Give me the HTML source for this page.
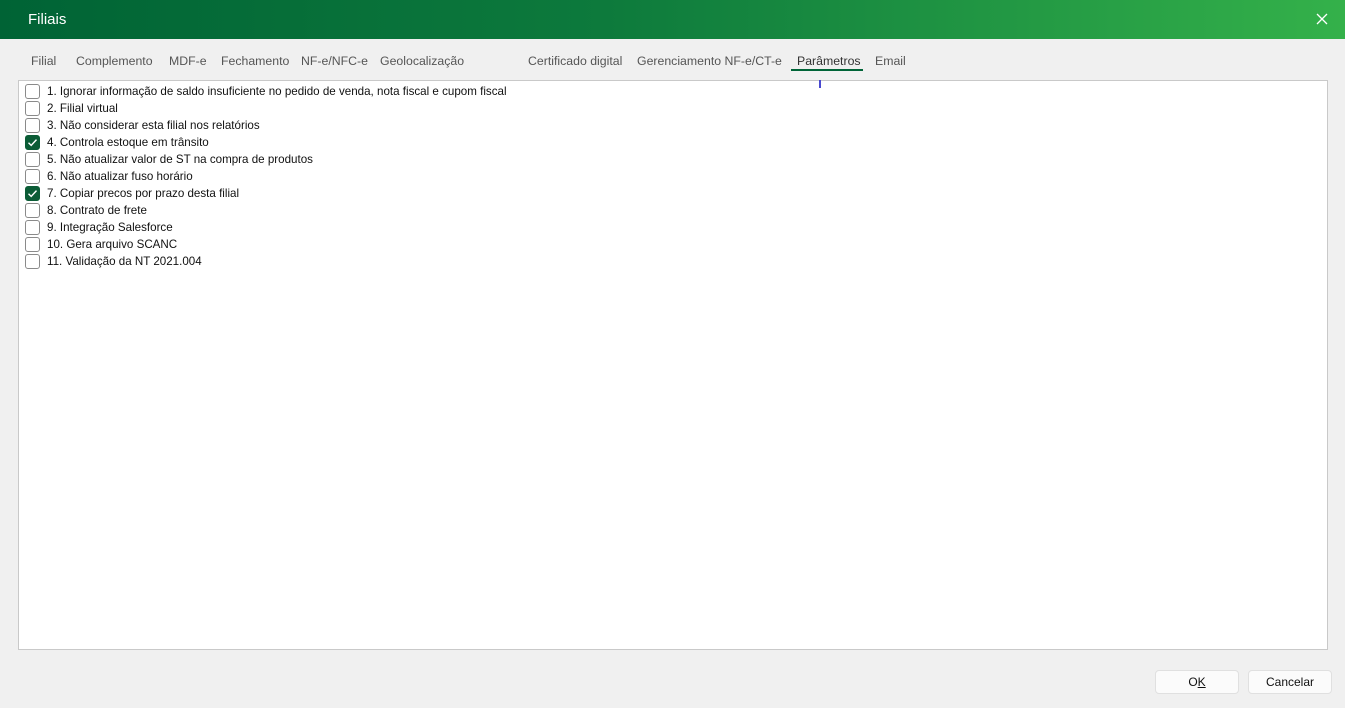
<!DOCTYPE html>
<html><head><meta charset="utf-8"><style>
*{margin:0;padding:0;box-sizing:border-box}
body{width:1345px;height:708px;background:#f0f0f0;font-family:"Liberation Sans",sans-serif;position:relative;overflow:hidden}
.title{position:absolute;left:0;top:0;width:1345px;height:39px;background:linear-gradient(90deg,#006335,#0d7a3c 45%,#34b14a);color:#fff;font-size:15px;line-height:39px;padding-left:28px}
.x{position:absolute;right:16px;top:12px;width:14px;height:14px}
.tab{position:absolute;top:54px;font-size:12.3px;color:#555;white-space:nowrap}
.ul{position:absolute;left:791px;top:69px;width:72px;height:2px;background:#006437}
.panel{position:absolute;left:18px;top:80px;width:1310px;height:570px;background:#fff;border:1px solid #c9c9c9}
.row{position:absolute;left:6px;height:17px;font-size:11.6px;color:#111;line-height:17px;padding-left:22px;white-space:nowrap}
.cb{position:absolute;left:0;top:1px;width:15px;height:15px;border:1px solid #8a8a8a;border-radius:3px;background:#fff}
.cb.on{background:#0b5c36;border-color:#0b5c36}
.cb.on svg{position:absolute;left:1px;top:1px}
.btn{position:absolute;top:670px;width:84px;height:24px;background:#fbfbfb;border:1px solid #e0e0e0;border-radius:4px;font-size:12px;text-align:center;line-height:22px;color:#111}
.cursor{position:absolute;left:819px;top:80px;width:2px;height:8px;background:#4a4ad0}
</style></head><body>
<div class="title">Filiais</div>
<svg class="x" viewBox="0 0 14 14"><path d="M2 2L12 12M12 2L2 12" stroke="#fff" stroke-width="1.3"/></svg>
<div class="tab" style="left:31px">Filial</div>
<div class="tab" style="left:76px">Complemento</div>
<div class="tab" style="left:169px">MDF-e</div>
<div class="tab" style="left:221px">Fechamento</div>
<div class="tab" style="left:301px">NF-e/NFC-e</div>
<div class="tab" style="left:380px">Geolocalização</div>
<div class="tab" style="left:528px">Certificado digital</div>
<div class="tab" style="left:637px">Gerenciamento NF-e/CT-e</div>
<div class="tab" style="left:797px;color:#333">Parâmetros</div>
<div class="tab" style="left:875px">Email</div>
<div class="ul"></div>
<div class="panel">
<div class="row" style="top:2px"><span class="cb"></span>1. Ignorar informação de saldo insuficiente no pedido de venda, nota fiscal e cupom fiscal</div>
<div class="row" style="top:19px"><span class="cb"></span>2. Filial virtual</div>
<div class="row" style="top:36px"><span class="cb"></span>3. Não considerar esta filial nos relatórios</div>
<div class="row" style="top:53px"><span class="cb on"><svg width="11" height="11" viewBox="0 0 11 11"><path d="M1.5 5.8L4.2 8.4L9.5 2.6" stroke="#fff" stroke-width="1.4" fill="none"/></svg></span>4. Controla estoque em trânsito</div>
<div class="row" style="top:70px"><span class="cb"></span>5. Não atualizar valor de ST na compra de produtos</div>
<div class="row" style="top:87px"><span class="cb"></span>6. Não atualizar fuso horário</div>
<div class="row" style="top:104px"><span class="cb on"><svg width="11" height="11" viewBox="0 0 11 11"><path d="M1.5 5.8L4.2 8.4L9.5 2.6" stroke="#fff" stroke-width="1.4" fill="none"/></svg></span>7. Copiar precos por prazo desta filial</div>
<div class="row" style="top:121px"><span class="cb"></span>8. Contrato de frete</div>
<div class="row" style="top:138px"><span class="cb"></span>9. Integração Salesforce</div>
<div class="row" style="top:155px"><span class="cb"></span>10. Gera arquivo SCANC</div>
<div class="row" style="top:172px"><span class="cb"></span>11. Validação da NT 2021.004</div>
</div>
<div class="cursor"></div>
<div class="btn" style="left:1155px">O<u>K</u></div>
<div class="btn" style="left:1248px">Cancelar</div>
</body></html>
